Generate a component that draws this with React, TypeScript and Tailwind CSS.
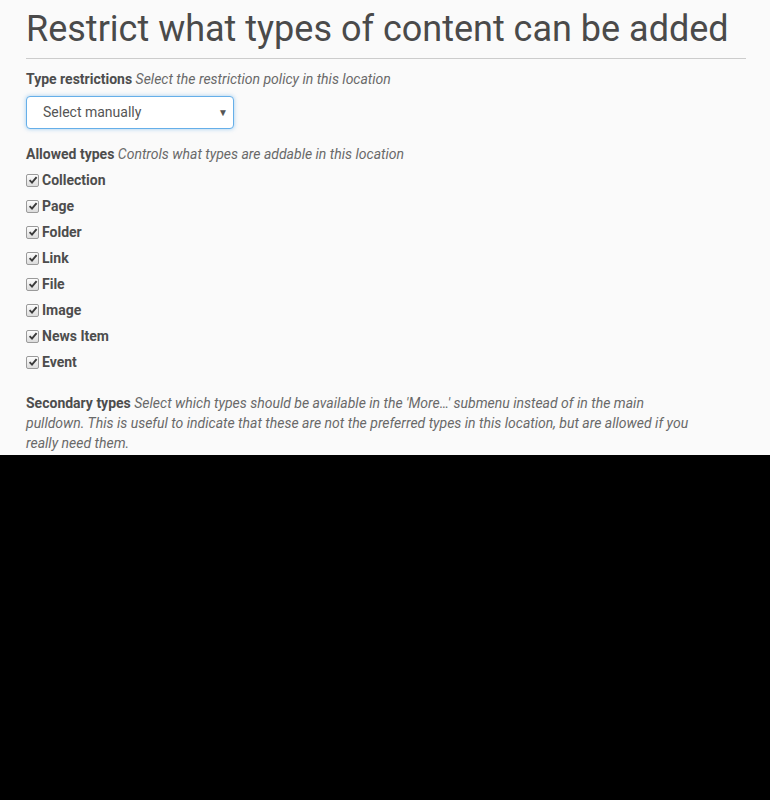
import React from "react";

const types = ["Collection", "Page", "Folder", "Link", "File", "Image", "News Item", "Event"];

function Check() {
  return (
    <span className="inline-flex w-[13px] h-[13px] mr-[3px] items-center justify-center rounded-[2px] border border-[#9a9a9a] bg-gradient-to-b from-[#fdfdfd] to-[#dcdcdc] shrink-0">
      <svg width="10" height="10" viewBox="0 0 10 10">
        <path d="M1.6 5.2 L4 7.6 L8.6 2.2" fill="none" stroke="#3a3a3a" strokeWidth="1.9" />
      </svg>
    </span>
  );
}

export default function App() {
  return (
    <div className="min-h-screen bg-black" style={{ fontFamily: "Roboto, 'Liberation Sans', sans-serif" }}>
      <div className="h-[455px] bg-[#fafafa] overflow-hidden pl-[26px] pr-[24px] text-[#4d4d4d]">
        <div className="w-[720px]">
          <h1 className="pt-[9px] text-[36px] leading-[40px] text-[#4a4a4a] font-normal whitespace-nowrap">
            Restrict what types of content can be added
          </h1>
          <div className="mt-[9px] h-px bg-[#cccccc]" />
          <div className="mt-[10px] text-[14px] leading-[20px]">
            <span className="font-bold">Type restrictions</span>{" "}
            <span className="italic text-[#696969]">Select the restriction policy in this location</span>
          </div>
          <div className="mt-[7px] w-[208px] h-[33px] rounded-[4px] border border-[#66afe9] shadow-[0_0_4px_rgba(102,175,233,0.6)] bg-white flex items-center pl-[16px] pr-[5px] text-[14px] text-[#555]">
            <span className="flex-1">Select manually</span>
            <span className="text-[10px] text-[#555]">▼</span>
          </div>
          <div className="mt-[15px] text-[14px] leading-[20px]">
            <span className="font-bold">Allowed types</span>{" "}
            <span className="italic text-[#696969]">Controls what types are addable in this location</span>
          </div>
          <div className="mt-[3px] flex flex-col">
            {types.map((t) => (
              <div key={t} className="h-[26px] flex items-center text-[14px] font-bold">
                <Check />
                <span>{t}</span>
              </div>
            ))}
          </div>
          <div className="mt-[18px] max-w-[670px] text-[14px] leading-[20px]">
            <span className="font-bold">Secondary types</span>{" "}
            <span className="italic text-[#696969]">
              Select which types should be available in the 'More…' submenu instead of in the main pulldown. This is useful to indicate that these are not the preferred types in this location, but are allowed if you really need them.
            </span>
          </div>
        </div>
      </div>
    </div>
  );
}
